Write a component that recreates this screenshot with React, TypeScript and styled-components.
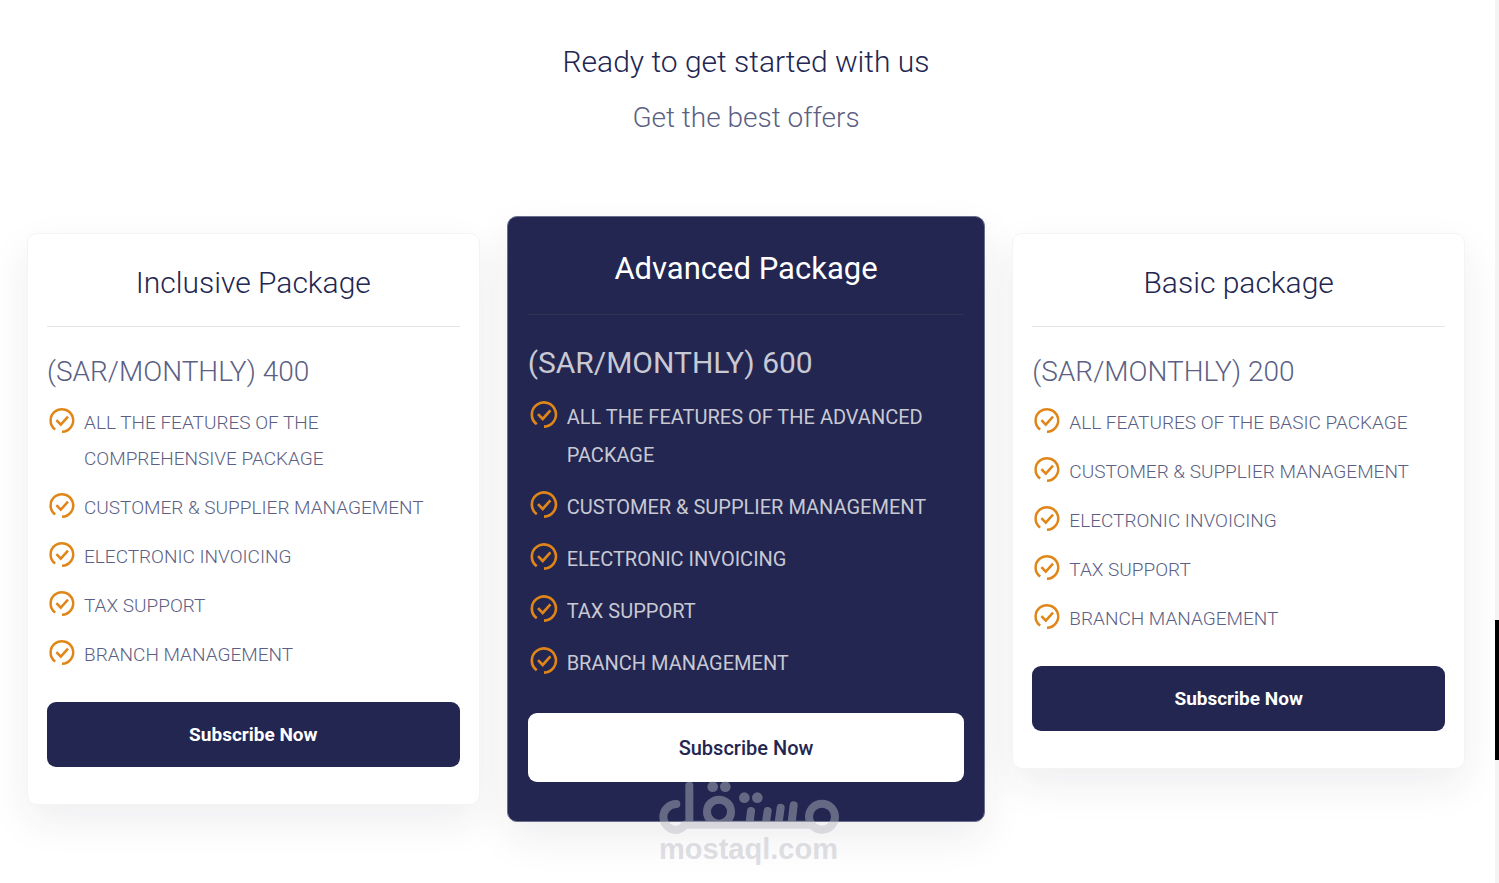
import React from "react";
import styled, { createGlobalStyle, css } from "styled-components";

const GlobalStyle = createGlobalStyle`
  *, *::before, *::after { box-sizing: border-box; }
  body {
    margin: 0;
    background: #fff;
    color: #222651;
    font-family: Roboto, "Noto Sans", sans-serif;
  }
  h1, h2, p, ul { margin: 0; padding: 0; font-weight: inherit; }
`;

const Page = styled.main`
  position: relative;
  padding: 40px 34px 79px 27px;
`;

const Intro = styled.header`
  text-align: center;
  font-weight: 300;
`;

const IntroTitle = styled.h1`
  font-size: 30px;
  line-height: 43px;
`;

const IntroText = styled.p`
  margin-top: 15px;
  font-size: 28px;
  line-height: 40px;
  color: #5c5f84;
`;

const Plans = styled.section`
  display: grid;
  grid-template-columns: repeat(3, minmax(0, 1fr));
  gap: 40px;
  align-items: start;
  margin-top: 95px;
`;

const Card = styled.article<{ $featured: boolean }>`
  padding: 25px 19px 37px;
  border: 1px solid #f4f4f5;
  border-radius: 10px;
  background: #fff;
  box-shadow: 0 16px 40px rgba(33, 37, 60, 0.08);
  ${(p) =>
    p.$featured &&
    css`
      margin: -17px -13px;
      padding: 26px 20px 39px;
      border-color: #6b6e8d;
      background: #222651;
      color: #fff;
    `}
`;

const CardTitle = styled.h2<{ $featured: boolean }>`
  padding-bottom: ${(p) => (p.$featured ? 20 : 19)}px;
  border-bottom: 1px solid ${(p) => (p.$featured ? "#2f3353" : "#e4e5e7")};
  text-align: center;
  font-size: ${(p) => (p.$featured ? 31 : 30)}px;
  font-weight: ${(p) => (p.$featured ? 400 : 300)};
  line-height: ${(p) => (p.$featured ? 51 : 48)}px;
`;

const Price = styled.p<{ $featured: boolean }>`
  margin-top: ${(p) => (p.$featured ? 22 : 21)}px;
  font-size: ${(p) => (p.$featured ? 30 : 28)}px;
  font-weight: ${(p) => (p.$featured ? 400 : 300)};
  line-height: ${(p) => (p.$featured ? 51 : 48)}px;
  color: ${(p) => (p.$featured ? "#c8c9d3" : "#5c5f84")};
`;

const Features = styled.ul<{ $featured: boolean }>`
  display: grid;
  gap: ${(p) => (p.$featured ? 14 : 13)}px;
  margin-top: ${(p) => (p.$featured ? 10 : 9)}px;
  list-style: none;
  font-size: ${(p) => (p.$featured ? 20 : 19)}px;
  font-weight: ${(p) => (p.$featured ? 400 : 300)};
  line-height: ${(p) => (p.$featured ? 38 : 36)}px;
  color: ${(p) => (p.$featured ? "#c8c9d3" : "#5c5f84")};
`;

const Feature = styled.li`
  display: flex;
  gap: 7px;
`;

const TickIcon = styled.svg<{ $featured: boolean }>`
  flex: none;
  width: ${(p) => (p.$featured ? 32 : 30)}px;
  height: ${(p) => (p.$featured ? 32 : 30)}px;
`;

const Subscribe = styled.button<{ $featured: boolean }>`
  display: block;
  width: 100%;
  height: ${(p) => (p.$featured ? 69 : 65)}px;
  margin-top: ${(p) => (p.$featured ? 31 : 29)}px;
  border: 0;
  border-radius: 9px;
  background: ${(p) => (p.$featured ? "#fff" : "#222651")};
  color: ${(p) => (p.$featured ? "#222651" : "#fff")};
  font-family: inherit;
  font-size: ${(p) => (p.$featured ? 20 : 19)}px;
  font-weight: ${(p) => (p.$featured ? 500 : 700)};
  cursor: pointer;
`;

const ScrollTrack = styled.div`
  position: fixed;
  inset: 0 0 0 auto;
  width: 4px;
  background: #f4f4f5;
`;

const ScrollThumb = styled.div`
  position: absolute;
  top: 70.2%;
  width: 100%;
  height: 15.9%;
  background: #000;
`;

const Watermark = styled.div`
  position: absolute;
  bottom: 21px;
  left: 50%;
  width: 180px;
  margin-left: -91px;
  color: #b9bac2;
  opacity: 0.45;
  pointer-events: none;
  text-align: center;
  font: 700 29px/28px "Liberation Sans", sans-serif;
`;

const WatermarkLogo = styled.svg`
  display: block;
  width: 180px;
  height: 54px;
`;

type Plan = {
  name: string;
  price: string;
  featured: boolean;
  features: string[];
};

const shared = [
  "CUSTOMER & SUPPLIER MANAGEMENT",
  "ELECTRONIC INVOICING",
  "TAX SUPPORT",
  "BRANCH MANAGEMENT",
];

const plans: Plan[] = [
  {
    name: "Inclusive Package",
    price: "(SAR/MONTHLY) 400",
    featured: false,
    features: ["ALL THE FEATURES OF THE COMPREHENSIVE PACKAGE", ...shared],
  },
  {
    name: "Advanced Package",
    price: "(SAR/MONTHLY) 600",
    featured: true,
    features: ["ALL THE FEATURES OF THE ADVANCED PACKAGE", ...shared],
  },
  {
    name: "Basic package",
    price: "(SAR/MONTHLY) 200",
    featured: false,
    features: ["ALL FEATURES OF THE BASIC PACKAGE", ...shared],
  },
];

function Tick({ featured }: { featured: boolean }) {
  return (
    <TickIcon
      $featured={featured}
      viewBox="0 0 30 30"
      fill="none"
      stroke="#e08618"
      strokeWidth="2.5"
      aria-hidden="true"
    >
      <path d="M8.2 24.6 A11.3 11.3 0 1 1 15 26.8" />
      <path d="M9.4 15.1 L13.8 19.7 L21 11.7" />
    </TickIcon>
  );
}

function PlanCard({ plan }: { plan: Plan }) {
  const f = plan.featured;
  return (
    <Card $featured={f}>
      <CardTitle $featured={f}>{plan.name}</CardTitle>
      <Price $featured={f}>{plan.price}</Price>
      <Features $featured={f}>
        {plan.features.map((text) => (
          <Feature key={text}>
            <Tick featured={f} />
            <span>{text}</span>
          </Feature>
        ))}
      </Features>
      <Subscribe $featured={f} type="button">
        Subscribe Now
      </Subscribe>
    </Card>
  );
}

export default function App() {
  return (
    <>
      <GlobalStyle />
      <Page>
        <Intro>
          <IntroTitle>Ready to get started with us</IntroTitle>
          <IntroText>Get the best offers</IntroText>
        </Intro>
        <Plans>
          {plans.map((plan) => (
            <PlanCard key={plan.name} plan={plan} />
          ))}
        </Plans>
        <Watermark>
          <WatermarkLogo
            viewBox="87 36 540 162"
            fill="none"
            stroke="currentColor"
            strokeWidth="24"
            strokeLinecap="round"
            aria-hidden="true"
          >
            <path d="M139 105 A39 39 0 1 0 139 183 Q155 181 165 167 H546 M178 50 V167" />
            <circle cx="267" cy="128" r="36" />
            <path d="M363 126 L359 160 M413 126 L408 160 M452 116 L446 160 M491 109 L485 160" />
            <circle cx="576" cy="143" r="39" />
            <g fill="currentColor" stroke="none">
              <circle cx="248" cy="53" r="16" />
              <circle cx="286" cy="53" r="16" />
              <circle cx="343" cy="86" r="16" />
              <circle cx="382" cy="86" r="16" />
            </g>
          </WatermarkLogo>
          mostaql.com
        </Watermark>
      </Page>
      <ScrollTrack>
        <ScrollThumb />
      </ScrollTrack>
    </>
  );
}
